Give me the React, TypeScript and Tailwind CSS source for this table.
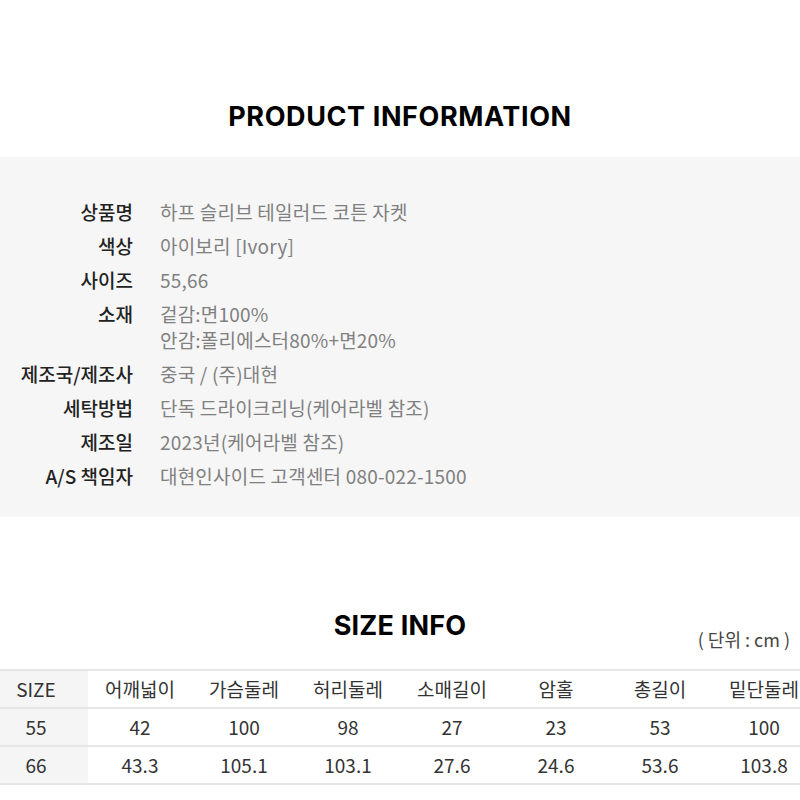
import React from 'react';

const productRows: { label: string; value: string[] }[] = [
  { label: '상품명', value: ['하프 슬리브 테일러드 코튼 자켓'] },
  { label: '색상', value: ['아이보리 [Ivory]'] },
  { label: '사이즈', value: ['55,66'] },
  { label: '소재', value: ['겉감:면100%', '안감:폴리에스터80%+면20%'] },
  { label: '제조국/제조사', value: ['중국 / (주)대현'] },
  { label: '세탁방법', value: ['단독 드라이크리닝(케어라벨 참조)'] },
  { label: '제조일', value: ['2023년(케어라벨 참조)'] },
  { label: 'A/S 책임자', value: ['대현인사이드 고객센터 080-022-1500'] },
];

const sizeHeader = ['SIZE', '어깨넓이', '가슴둘레', '허리둘레', '소매길이', '암홀', '총길이', '밑단둘레'];
const sizeRows = [
  ['55', '42', '100', '98', '27', '23', '53', '100'],
  ['66', '43.3', '105.1', '103.1', '27.6', '24.6', '53.6', '103.8'],
];

const korean = "font-['Noto_Sans_CJK_KR','Noto_Sans',sans-serif]";

export default function App() {
  return (
    <div className={`w-[800px] h-[800px] overflow-hidden bg-white ${korean}`}>
      {/* product information */}
      <div className="pt-[100px] pb-[23px] text-center">
        <h2 className="font-['Inter',sans-serif] font-bold text-[27px] leading-[34px] text-black tracking-[0.6px]">
          PRODUCT INFORMATION
        </h2>
      </div>
      <div className="bg-[#f6f6f6] pt-[42px] pb-[28px]">
        <div className="grid grid-cols-[133px_1fr] gap-x-[27px] gap-y-[8px] text-[19px] leading-[26px]">
          {productRows.map((row) => (
            <React.Fragment key={row.label}>
              <div className="text-right font-medium text-[#222] whitespace-nowrap">{row.label}</div>
              <div className="text-[#808080] tracking-[0.2px]">
                {row.value.map((v) => (
                  <div key={v}>{v}</div>
                ))}
              </div>
            </React.Fragment>
          ))}
        </div>
      </div>

      {/* size info */}
      <div className="mt-[92px] grid grid-cols-[1fr_auto_1fr] items-start">
        <div />
        <h2 className="font-['Inter',sans-serif] font-bold text-[27px] leading-[34px] text-black tracking-[0.2px]">
          SIZE INFO
        </h2>
        <div className="pt-[19px] pr-[10px] text-right text-[18px] leading-[22px] text-[#444]">( 단위 : cm )</div>
      </div>
      <div className="mt-[19px] ml-[-16px] w-[832px]">
        <div className="border-t-2 border-[#e6e6e6]">
          <div className="grid grid-cols-8 h-[38px] border-b-2 border-[#e6e6e6] items-center text-center text-[19px] text-[#333]">
            {sizeHeader.map((h, i) => (
              <div key={h} className={`h-full flex items-center justify-center ${i === 0 ? 'bg-[#f5f5f5]' : ''}`}>
                {h}
              </div>
            ))}
          </div>
          {sizeRows.map((row) => (
            <div
              key={row[0]}
              className="grid grid-cols-8 h-[38px] border-b-2 border-[#e6e6e6] items-center text-center text-[19px] text-[#333]"
            >
              {row.map((c, i) => (
                <div key={i} className={`h-full flex items-center justify-center ${i === 0 ? 'bg-[#f5f5f5]' : ''}`}>
                  {c}
                </div>
              ))}
            </div>
          ))}
        </div>
      </div>
    </div>
  );
}
